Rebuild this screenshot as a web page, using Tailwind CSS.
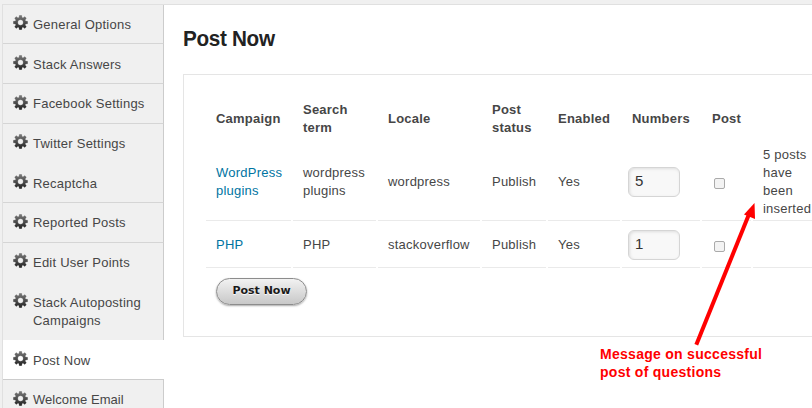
<!DOCTYPE html>
<html lang="en">
<head>
<meta charset="utf-8">
<title>Post Now</title>
<script src="https://cdn.jsdelivr.net/npm/@tailwindcss/browser@4"></script>
</head>
<body class="h-[408px] w-[812px] overflow-hidden bg-[#f0f0f0] font-['Liberation_Sans',Arial,sans-serif] text-[13px] leading-[18px] tracking-[0.23px] text-[#464646]">
<svg class="absolute size-0">
  <defs>
    <linearGradient id="shade" x1="0" y1="0" x2="0" y2="1"><stop offset="0" stop-color="#7a7a7a"/><stop offset="1" stop-color="#222"/></linearGradient>
  </defs>
  <symbol id="gear" viewBox="-7.5 -7.5 15 15">
    <path fill="url(#shade)" stroke="url(#shade)" stroke-width=".2" fill-rule="evenodd" d="M-1.2-7.2H1.2L1.6-5.1L2.6-4.7L4.3-5.9L5.9-4.3L4.7-2.6L5.1-1.5L7.2-1.2V1.2L5.1 1.6L4.7 2.6L5.9 4.3L4.3 5.9L2.6 4.7L1.6 5.1L1.2 7.2H-1.2L-1.6 5.1L-2.6 4.7L-4.3 5.9L-5.9 4.3L-4.7 2.6L-5.1 1.6L-7.2 1.2V-1.2L-5.1-1.6L-4.7-2.6L-5.9-4.3L-4.3-5.9L-2.6-4.7L-1.6-5.1ZM0-2.7A2.7 2.7 0 1 0 0 2.7A2.7 2.7 0 1 0 0-2.7Z"/>
  </symbol>
</svg>
<div class="ml-[2px] mt-[4px] flex h-[404px] border-l border-t border-[#e0e0e0] bg-white">
  <nav class="flex w-[161px] shrink-0 flex-col *:shrink-0">
    <a class="flex h-[39px] gap-[5px] border-r border-b border-[#ccc] border-b-[#d5d5d5] bg-[#f0f0f0] pl-[10px] pt-[11px]"><svg class="mt-[-1px] size-[15px] shrink-0"><use href="#gear"/></svg><span>General Options</span></a>
    <a class="flex h-[40px] gap-[5px] border-r border-b border-[#ccc] border-b-[#d5d5d5] bg-[#f0f0f0] pl-[10px] pt-[12px]"><svg class="mt-[-1px] size-[15px] shrink-0"><use href="#gear"/></svg><span>Stack Answers</span></a>
    <a class="flex h-[40px] gap-[5px] border-r border-b border-[#ccc] border-b-[#d5d5d5] bg-[#f0f0f0] pl-[10px] pt-[11px]"><svg class="size-[15px] shrink-0"><use href="#gear"/></svg><span>Facebook Settings</span></a>
    <a class="flex h-[39px] gap-[5px] border-r border-[#ccc] bg-[#f0f0f0] pl-[10px] pt-[11px]"><svg class="mt-[-1px] size-[15px] shrink-0"><use href="#gear"/></svg><span>Twitter Settings</span></a>
    <a class="flex h-[40px] gap-[5px] border-r border-b border-[#ccc] border-b-[#d5d5d5] bg-[#f0f0f0] pl-[10px] pt-[12px]"><svg class="mt-[-1px] size-[15px] shrink-0"><use href="#gear"/></svg><span>Recaptcha</span></a>
    <a class="flex h-[40px] gap-[5px] border-r border-b border-[#ccc] border-b-[#d5d5d5] bg-[#f0f0f0] pl-[10px] pt-[11px]"><svg class="size-[15px] shrink-0"><use href="#gear"/></svg><span>Reported Posts</span></a>
    <a class="flex h-[39px] gap-[5px] border-r border-[#ccc] bg-[#f0f0f0] pl-[10px] pt-[11px]"><svg class="mt-[-1px] size-[15px] shrink-0"><use href="#gear"/></svg><span>Edit User Points</span></a>
    <a class="flex h-[58px] gap-[5px] border-r border-[#ccc] bg-[#f0f0f0] pl-[10px] pt-[12px]"><svg class="mt-[-1px] size-[15px] shrink-0"><use href="#gear"/></svg><span>Stack Autoposting<br>Campaigns</span></a>
    <a class="flex h-[40px] gap-[5px] border-b border-[#ccc] bg-white pl-[10px] pt-[12px]"><svg class="mt-[-1px] size-[15px] shrink-0"><use href="#gear"/></svg><span>Post Now</span></a>
    <a class="flex h-[40px] gap-[5px] border-r border-[#ccc] bg-[#f0f0f0] pl-[10px] pt-[11px]"><svg class="size-[15px] shrink-0"><use href="#gear"/></svg><span class="tracking-[0.05px]">Welcome Email</span></a>
  </nav>
  <main class="w-[648px] shrink-0 pl-[19px] pt-[20px]">
    <h1 class="h-[49px] origin-left scale-x-[0.92] text-[22.5px] font-bold leading-[28px] tracking-[-0.35px] text-[#222]">Post Now</h1>
    <section class="h-[263px] border-y border-l border-[#e5e5e5] pl-[22px] pt-[22px]">
      <div class="grid grid-cols-[85px_83px_102px_64px_72px_78px_49px_60px] grid-rows-[45px_78px_46px] gap-x-[2px] gap-y-[1px] whitespace-nowrap *:flex *:items-center *:pl-[10px]">
        <b class="-mt-[2px]">Campaign</b><b class="-mt-[2px]">Search<br>term</b><b class="-mt-[2px]">Locale</b><b class="-mt-[2px]">Post<br>status</b><b class="-mt-[2px]">Enabled</b><b class="-mt-[2px]">Numbers</b><b class="-mt-[2px]">Post</b><b></b>
        <div class="border-b border-[#eaeaea] pt-px text-[#0074a2]">WordPress<br>plugins</div>
        <div class="border-b border-[#eaeaea] pt-px">wordpress<br>plugins</div>
        <div class="border-b border-[#eaeaea] pt-px">wordpress</div>
        <div class="border-b border-[#eaeaea] pt-px">Publish</div>
        <div class="border-b border-[#eaeaea] pt-px">Yes</div>
        <div class="border-b border-[#eaeaea] pt-px"><span class="ml-[-4px] h-[30px] w-[52px] rounded-[6px] border border-[#d5d5d5] bg-[#f8f8f8] pl-[6px] pt-[4px] text-[15px] tracking-normal text-[#333] shadow-[inset_1px_1px_3px_#ddd]">5</span></div>
        <div class="border-b border-[#eaeaea] pt-px"><span class="ml-[2px] mt-[2px] size-[11px] rounded-[2px] border border-[#aaa] bg-[#f3f3f3]"></span></div>
        <div class="border-b border-[#eaeaea] pt-px">5 posts<br>have<br>been<br>inserted</div>
        <div class="border-b border-[#eaeaea] pt-px text-[#0074a2]">PHP</div>
        <div class="border-b border-[#eaeaea] pt-px">PHP</div>
        <div class="border-b border-[#eaeaea] pt-px">stackoverflow</div>
        <div class="border-b border-[#eaeaea] pt-px">Publish</div>
        <div class="border-b border-[#eaeaea] pt-px">Yes</div>
        <div class="border-b border-[#eaeaea] pt-px"><span class="ml-[-4px] h-[30px] w-[52px] rounded-[6px] border border-[#d5d5d5] bg-[#f8f8f8] pl-[6px] pt-[4px] text-[15px] tracking-normal text-[#333] shadow-[inset_1px_1px_3px_#ddd]">1</span></div>
        <div class="border-b border-[#eaeaea] pt-px"><span class="ml-[2px] mt-[2px] size-[11px] rounded-[2px] border border-[#aaa] bg-[#f3f3f3]"></span></div>
        <div class="border-b border-[#eaeaea]"></div>
      </div>
      <button class="ml-[10px] mt-[10px] block h-[27px] w-[91px] rounded-full border border-[#8c8c8c] bg-linear-to-b from-[#f2f2f2] to-[#c8c8c8] pb-[2px] font-['DejaVu_Sans',sans-serif] text-[11px] font-bold leading-[22px] tracking-[0px] text-[#1a1a1a] shadow-[0_1px_2px_#aaa] [text-shadow:0_1px_1px_#fff]">Post Now</button>
    </section>
  </main>
</div>
<svg class="absolute left-0 top-0 h-[408px] w-[812px]" viewBox="0 0 812 408">
  <path d="M696.3 344.7L749.5 213" stroke="#f00" stroke-width="4" fill="none"/>
  <path d="M754.5 203L755 219L744 214.5Z" fill="#f00"/>
</svg>
<p class="absolute left-[600px] top-[345px] whitespace-nowrap text-[14px] font-bold leading-[18px] tracking-[0.28px] text-[#f00]">Message on successful<br>post of questions</p>
</body>
</html>
